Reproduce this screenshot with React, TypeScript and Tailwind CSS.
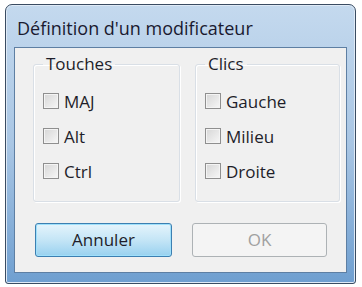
import React from "react";

const font = { fontFamily: '"Open Sans", "Noto Sans", sans-serif' };

function Check({ label }: { label: string }) {
  return (
    <div className="flex items-center gap-[5px] h-[16px]">
      <span className="h-[16px] w-[16px] border border-[#8f8f8f] bg-gradient-to-br from-[#d6d6d6] to-[#f7f7f7] shadow-[inset_0_0_0_1px_#f4f4f4]" />
      <span className="text-[17px] leading-none text-[#1e1e2a]">{label}</span>
    </div>
  );
}

function Group({ title, items, width }: { title: string; items: string[]; width: string }) {
  return (
    <fieldset
      className={`${width} h-[148px] rounded-[3px] border border-[#d9dfe6] shadow-[inset_1px_1px_0_#ffffff,1px_1px_0_#ffffff] pl-[9px] pt-[19px]`}
    >
      <legend className="px-[3px] text-[17px] leading-[20px] text-[#1e1e2a]">{title}</legend>
      <div className="flex flex-col gap-[19px]">
        {items.map((i) => (
          <Check key={i} label={i} />
        ))}
      </div>
    </fieldset>
  );
}

export default function App() {
  return (
    <div className="h-[287px] w-[362px] bg-white pl-[5px] pt-[4px]" style={font}>
      <div className="h-[280px] w-[351px] rounded-t-[7px] rounded-b-[3px] border border-[#3a4c62] bg-gradient-to-b from-[#c4d9ee] via-[#a9c6e4] to-[#6f9fd0] p-[1px] shadow-[inset_0_0_0_1px_#dfeaf6]">
        <div className="flex h-[41px] items-center pl-[10px] pt-[3px] text-[18px] text-[#1a1a30]">
          Définition d'un modificateur
        </div>
        <div className="mx-[7px] h-[226px] border border-[#5e7fa3] bg-[#f0f0f0] pl-[18px] pt-[6px]">
          <div className="flex gap-[15px]">
            <Group title="Touches" items={["MAJ", "Alt", "Ctrl"]} width="w-[147px]" />
            <Group title="Clics" items={["Gauche", "Milieu", "Droite"]} width="w-[145px]" />
          </div>
          <div className="mt-[21px] flex gap-[20px] pl-[2px]">
            <button className="h-[34px] w-[137px] rounded-[3px] border border-[#3c7fb1] bg-gradient-to-b from-[#e5f4fc] via-[#c4e5f6] to-[#98d1ef] text-[17px] text-[#1e1e2a] shadow-[inset_0_0_0_1px_#9fe0fb]">
              Annuler
            </button>
            <button className="h-[34px] w-[135px] rounded-[3px] border border-[#adb2b5] bg-[#f4f4f4] text-[17px] text-[#a0a0a0]">
              OK
            </button>
          </div>
        </div>
      </div>
    </div>
  );
}
